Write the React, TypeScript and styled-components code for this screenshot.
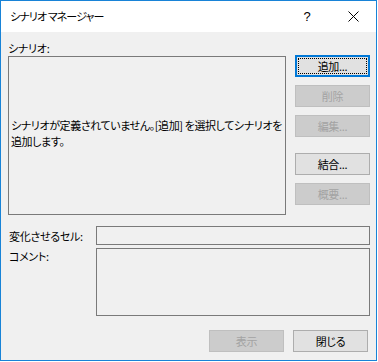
import React from "react";
import styled, { createGlobalStyle, css } from "styled-components";

const Global = createGlobalStyle`
  html, body { margin: 0; padding: 0; background: #ffffff; }
  body {
    font-family: "Noto Sans CJK JP", "Noto Sans", sans-serif;
    font-size: 11px;
    letter-spacing: -0.3px;
    color: #000;
    font-feature-settings: "palt";
  }
  * { box-sizing: border-box; }
`;

const Window = styled.div`
  width: 377px;
  height: 361px;
  border: 1px solid #1883d7;
  background: #f0f0f0;
  display: flex;
  flex-direction: column;
`;

const TitleBar = styled.div`
  height: 31px;
  background: #ffffff;
  display: flex;
  align-items: center;
  padding-left: 9px;
`;

const Title = styled.div`
  flex: 1;
  font-size: 11px;
  letter-spacing: -0.9px;
  line-height: 16px;
  margin-top: -2px;
`;

const CaptionButton = styled.div`
  width: 46px;
  height: 31px;
  display: flex;
  align-items: center;
  justify-content: center;
  font-family: "Liberation Sans", sans-serif;
  font-size: 13px;
  letter-spacing: 0;
`;

const Content = styled.div`
  flex: 1;
  padding: 8px 7px 0 7px;
  display: flex;
  flex-direction: column;
`;

const TopSection = styled.div`
  display: flex;
  gap: 9px;
`;

const ListColumn = styled.div`
  display: flex;
  flex-direction: column;
`;

const Label = styled.div`
  line-height: 16px;
  height: 16px;
`;

const ListBox = styled.div`
  width: 278px;
  height: 159px;
  border: 1px solid #7a7a7a;
  display: flex;
  flex-direction: column;
  justify-content: center;
  padding: 0 2px 5px 2px;
  white-space: nowrap;
  letter-spacing: -0.4px;
`;

const Line = styled.div`
  line-height: 16px;
  height: 16px;
`;

const ButtonColumn = styled.div`
  display: flex;
  flex-direction: column;
  padding-top: 15px;
`;

const Button = styled.div<{ $disabled?: boolean; $default?: boolean; $gap?: number }>`
  position: relative;
  width: 75px;
  height: 22px;
  margin-top: ${(p) => p.$gap ?? 0}px;
  background: #e1e1e1;
  border: 1px solid #adadad;
  display: flex;
  align-items: center;
  justify-content: center;
  line-height: 16px;
  ${(p) =>
    p.$disabled &&
    css`
      background: #cccccc;
      border-color: #bfbfbf;
      color: #a3a3a3;
    `}
  ${(p) =>
    p.$default &&
    css`
      border-color: #0078d7;
      box-shadow: inset 0 0 0 1px #0078d7;
      &::after {
        content: "";
        position: absolute;
        inset: 2px;
        border: 1px dotted #000;
      }
    `}
`;

const FieldGrid = styled.div`
  margin-top: 11px;
  display: grid;
  grid-template-columns: 88px 274px;
  row-gap: 3px;
`;

const FieldLabel = styled.div<{ $top?: boolean }>`
  line-height: 16px;
  align-self: ${(p) => (p.$top ? "start" : "center")};
  padding-left: 1px;
  white-space: nowrap;
`;

const Field = styled.div<{ $h: number }>`
  height: ${(p) => p.$h}px;
  border: 1px solid #7a7a7a;
`;

const Footer = styled.div`
  margin-top: 14px;
  display: flex;
  justify-content: flex-end;
  gap: 9px;
  padding-right: 1px;
`;

const CloseIcon = () => (
  <svg width="11" height="11" viewBox="0 0 11 11">
    <path d="M0.5 0.5 L10.5 10.5 M10.5 0.5 L0.5 10.5" stroke="#000" strokeWidth="1" />
  </svg>
);

export default function App() {
  return (
    <>
      <Global />
      <Window>
        <TitleBar>
          <Title>シナリオ マネージャー</Title>
          <CaptionButton>?</CaptionButton>
          <CaptionButton>
            <CloseIcon />
          </CaptionButton>
        </TitleBar>
        <Content>
          <TopSection>
            <ListColumn>
              <Label>シナリオ:</Label>
              <ListBox>
                <Line>シナリオが定義されていません。[追加] を選択してシナリオを</Line>
                <Line>追加します。</Line>
              </ListBox>
            </ListColumn>
            <ButtonColumn>
              <Button $default>追加...</Button>
              <Button $disabled $gap={8}>削除</Button>
              <Button $disabled $gap={8}>編集...</Button>
              <Button $gap={16}>結合...</Button>
              <Button $disabled $gap={8}>概要...</Button>
            </ButtonColumn>
          </TopSection>
          <FieldGrid>
            <FieldLabel>変化させるセル:</FieldLabel>
            <Field $h={19} />
            <FieldLabel $top>コメント:</FieldLabel>
            <Field $h={68} />
          </FieldGrid>
          <Footer>
            <Button $disabled>表示</Button>
            <Button>閉じる</Button>
          </Footer>
        </Content>
      </Window>
    </>
  );
}
